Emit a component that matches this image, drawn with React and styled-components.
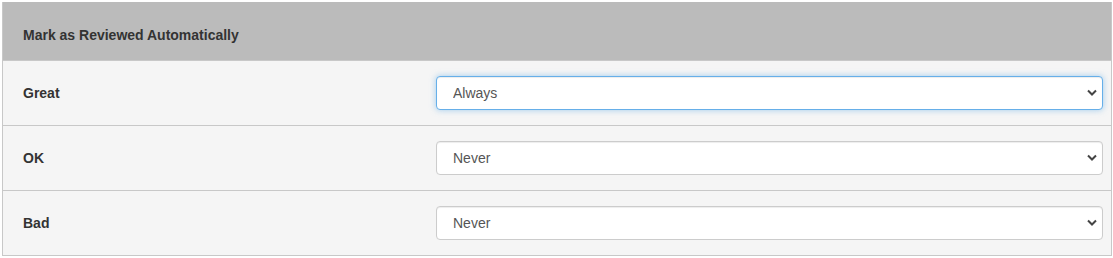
import React, { useState } from "react";
import styled, { createGlobalStyle } from "styled-components";

const GlobalStyle = createGlobalStyle`
  html, body {
    margin: 0;
    padding: 0;
    background: #ffffff;
    font-family: "Liberation Sans", Arial, sans-serif;
  }
`;

const Page = styled.div`
  padding: 2px 1px 2px 2px;
`;

const Panel = styled.div`
  border: 1px solid #c8c8c8;
  border-top: 0;
  background: #f5f5f5;
`;

const Header = styled.div`
  height: 58px;
  box-sizing: border-box;
  background: #bbbbbb;
  display: flex;
  align-items: center;
  padding: 7px 0 0 20px;
  font-size: 14px;
  font-weight: 700;
  color: #333333;
`;

const Row = styled.div`
  display: grid;
  grid-template-columns: 433px 1fr;
  align-items: center;
  height: 64px;
  border-top: 1px solid #c8c8c8;
  padding-right: 8px;
`;

const Label = styled.div`
  padding-left: 20px;
  font-size: 14px;
  font-weight: 700;
  color: #333333;
`;

const SelectWrap = styled.div`
  position: relative;
  height: 34px;
`;

const Select = styled.select`
  appearance: none;
  -webkit-appearance: none;
  width: 100%;
  height: 34px;
  box-sizing: border-box;
  padding: 0 30px 0 16px;
  font-family: "Liberation Sans", Arial, sans-serif;
  font-size: 14px;
  color: #555555;
  background: #ffffff;
  border: 1px solid ${(p) => (p.$focused ? "#66afe9" : "#cccccc")};
  border-radius: 4px;
  box-shadow: ${(p) =>
    p.$focused
      ? "inset 0 1px 1px rgba(0,0,0,.075), 0 0 6px rgba(102,175,233,.6)"
      : "inset 0 1px 1px rgba(0,0,0,.075)"};
  outline: none;
`;

const Chevron = styled.svg`
  position: absolute;
  right: 6px;
  top: 13px;
  pointer-events: none;
`;

const rows = [
  { label: "Great", value: "Always", focused: true },
  { label: "OK", value: "Never" },
  { label: "Bad", value: "Never" },
];

const Field = ({ label, value, focused }) => {
  const [v, setV] = useState(value);
  return (
    <Row>
      <Label>{label}</Label>
      <SelectWrap>
        <Select $focused={focused} value={v} onChange={(e) => setV(e.target.value)}>
          <option>Always</option>
          <option>Never</option>
        </Select>
        <Chevron width="10" height="8" viewBox="0 0 10 8">
          <path d="M1 1.5 L5 5.5 L9 1.5" fill="none" stroke="#444" strokeWidth="2" />
        </Chevron>
      </SelectWrap>
    </Row>
  );
};

export default function App() {
  return (
    <>
      <GlobalStyle />
      <Page>
        <Panel>
          <Header>Mark as Reviewed Automatically</Header>
          {rows.map((r) => (
            <Field key={r.label} {...r} />
          ))}
        </Panel>
      </Page>
    </>
  );
}
